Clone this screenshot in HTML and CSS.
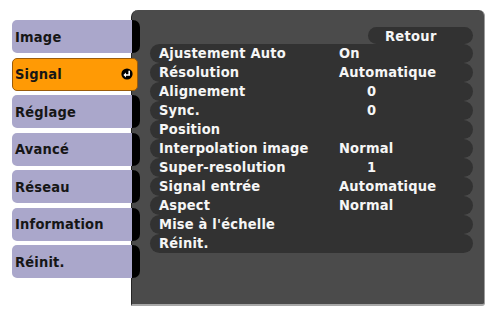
FILE: index.html
```html
<!DOCTYPE html>
<html>
  <head>
    <title>Signal</title>
    <meta charset="UTF-8" />
    <link rel="stylesheet" href="styles.css">
  </head>
  <body>
    <div class="screen">

      <!-- menu tabs -->
      <div class="tabs">
        <div class="tab">Image</div>
        <div class="tab active">Signal
          <svg class="enter" width="12" height="12" viewBox="0 0 12 12">
            <circle cx="6" cy="6" r="5.6" fill="#000"/>
            <path d="M8.2 2.8 V7 H4.6" stroke="#fff" stroke-width="1.6" fill="none"/>
            <path d="M2.4 7 L5 4.6 V9.4 Z" fill="#fff"/>
          </svg>
        </div>
        <div class="tab">Réglage</div>
        <div class="tab">Avancé</div>
        <div class="tab">Réseau</div>
        <div class="tab">Information</div>
        <div class="tab">Réinit.</div>
      </div>

      <!-- settings panel -->
      <div class="panel">
        <div class="back">Retour</div>
        <div class="rows">
          <div class="row"><span class="label">Ajustement Auto</span><span class="value">On</span></div>
          <div class="row"><span class="label">Résolution</span><span class="value">Automatique</span></div>
          <div class="row"><span class="label">Alignement</span><span class="value num">0</span></div>
          <div class="row"><span class="label">Sync.</span><span class="value num">0</span></div>
          <div class="row"><span class="label">Position</span></div>
          <div class="row"><span class="label">Interpolation image</span><span class="value">Normal</span></div>
          <div class="row"><span class="label">Super-resolution</span><span class="value num">1</span></div>
          <div class="row"><span class="label">Signal entrée</span><span class="value">Automatique</span></div>
          <div class="row"><span class="label">Aspect</span><span class="value">Normal</span></div>
          <div class="row"><span class="label">Mise à l'échelle</span></div>
          <div class="row"><span class="label">Réinit.</span></div>
        </div>
      </div>

    </div>
  </body>
</html>
```

FILE: styles.css
```css
html, body {
  margin: 0;
  background: #fff;
}

.screen {
  display: flex;
  width: 489px;
  height: 312px;
  box-sizing: border-box;
  padding: 10px 4px 6px 12px;
  font-family: "DejaVu Sans Condensed", "DejaVu Sans", sans-serif;
  font-stretch: condensed;
  font-weight: bold;
  font-size: 14.5px;
}

/* left column */
.tabs {
  display: flex;
  flex-direction: column;
  gap: 4.5px;
  width: 128px;
  padding-top: 10px;
  margin-right: -9px;
  position: relative;
  z-index: 1;
}

.tab {
  display: flex;
  align-items: center;
  height: 33px;
  box-sizing: border-box;
  padding-left: 3px;
  background: #aaa7cb;
  color: #161616;
  border-right: 8px solid #000;
  border-radius: 5px 7px 7px 5px;
  letter-spacing: 0.2px;
}

.tab.active {
  background: #ff9a05;
  border: 1px solid #9a5c0a;
  padding-left: 2px;
  margin-right: 2px;
  border-radius: 5px;
}

.enter {
  margin-left: auto;
  margin-right: 4px;
}

/* right panel */
.panel {
  flex: 1;
  display: flex;
  flex-direction: column;
  padding: 17px 11px 0 18px;
  background: #4b4b4b;
  border-left: 1px solid #262626;
  border-right: 1px solid #9c9c9c;
  border-bottom: 2px solid #a8a8a8;
  border-radius: 7px 6px 3px 0;
  color: #f6f6f6;
}

.back {
  align-self: flex-end;
  width: 105px;
  height: 17px;
  line-height: 18px;
  box-sizing: border-box;
  padding-left: 17px;
  background: #323232;
  border-radius: 9px;
  letter-spacing: 0.3px;
}

.row {
  display: flex;
  height: 19px;
  line-height: 18px;
  background: #323232;
  border-radius: 9.5px;
  letter-spacing: 0.2px;
}

.label {
  width: 189px;
  flex: none;
  box-sizing: border-box;
  padding-left: 9px;
  white-space: nowrap;
}

.value.num {
  padding-left: 28px;
}
```
